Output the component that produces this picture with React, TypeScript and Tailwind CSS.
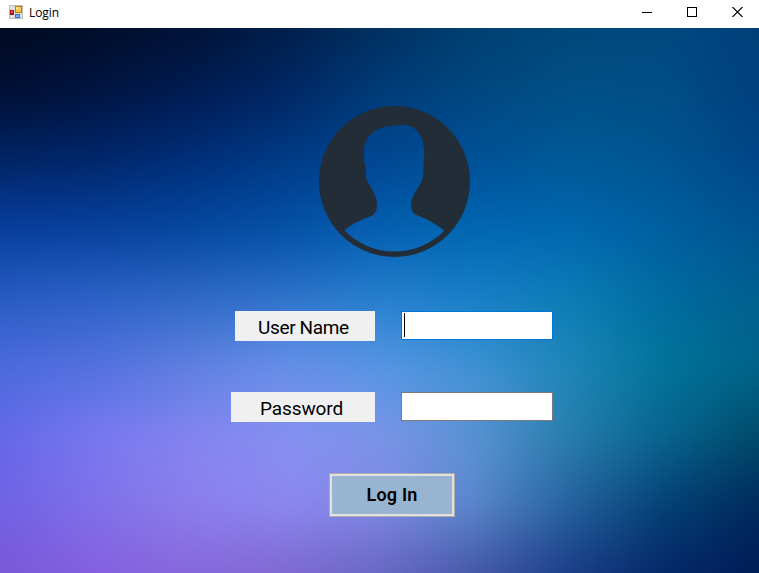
import { useId } from "react";

// Colour samples of the wallpaper, evenly spaced from the top left to the bottom right.
const WALLPAPER = [
  ["#000a20", "#000e28", "#001236", "#001e4a", "#003060", "#004070", "#00487a", "#004880", "#003f7a"],
  ["#001036", "#001544", "#001c54", "#002866", "#003c7a", "#004882", "#005088", "#004f88", "#00407f"],
  ["#002668", "#00286e", "#00307c", "#003c88", "#004894", "#005298", "#005a98", "#005592", "#004688"],
  ["#083fa0", "#0842a0", "#0449a2", "#0452a8", "#0560b2", "#0068b4", "#0069b0", "#0060a0", "#005490"],
  ["#2a5cc4", "#2e62c8", "#326ac8", "#3074cc", "#2880d0", "#1880c8", "#0c7eb6", "#006ca0", "#006090"],
  ["#4c6bdc", "#5472e0", "#6080e2", "#6890e8", "#5896e4", "#4092d4", "#1e86b8", "#00749a", "#006488"],
  ["#6468e8", "#7878f0", "#8484f0", "#8690f0", "#7c94e8", "#5a92d4", "#287eae", "#08648e", "#004a6a"],
  ["#7062e4", "#8070ea", "#8c7eec", "#8c88f0", "#8088e4", "#5a88cc", "#2662a0", "#044274", "#002a5c"],
  ["#7858d8", "#8460e0", "#8668dc", "#8068d0", "#6868c4", "#4658a8", "#1a3e88", "#042868", "#001c56"],
];

function Wallpaper() {
  const id = useId();
  const band = 68;
  return (
    <svg className="absolute inset-0" width="759" height="545" viewBox="0 0 759 545" aria-hidden="true">
      <defs>
        {WALLPAPER.map((row, r) => (
          <linearGradient key={r} id={`${id}row${r}`} gradientUnits="userSpaceOnUse" x1="0" x2="759" y1="0" y2="0">
            {row.map((c, i) => (
              <stop key={i} offset={i / 8} stopColor={c} />
            ))}
          </linearGradient>
        ))}
        <linearGradient id={`${id}fade`} x1="0" x2="0" y1="0" y2="1">
          <stop offset="0" stopColor="#fff" stopOpacity="0" />
          <stop offset="1" stopColor="#fff" />
        </linearGradient>
        {WALLPAPER.slice(1).map((_, r) => (
          <mask key={r} id={`${id}mask${r}`} maskUnits="userSpaceOnUse" x="-60" y={r * band} width="880" height={band} style={{ maskType: "alpha" }}>
            <rect x="-60" y={r * band} width="880" height={band} fill={`url(#${id}fade)`} />
          </mask>
        ))}
        <filter id={`${id}soft`} filterUnits="userSpaceOnUse" x="-60" y="-60" width="880" height="665" colorInterpolationFilters="sRGB">
          <feGaussianBlur stdDeviation="14" />
        </filter>
      </defs>
      <g filter={`url(#${id}soft)`}>
        <rect x="-60" y="-60" width="880" height="60" fill={`url(#${id}row0)`} />
        {WALLPAPER.slice(0, 8).map((_, r) => (
          <g key={r}>
            <rect x="-60" y={r * band} width="880" height={band} fill={`url(#${id}row${r})`} />
            <rect x="-60" y={r * band} width="880" height={band} fill={`url(#${id}row${r + 1})`} mask={`url(#${id}mask${r})`} />
          </g>
        ))}
        <rect x="-60" y="544" width="880" height="61" fill={`url(#${id}row8)`} />
      </g>
    </svg>
  );
}

function AppIcon() {
  return (
    <svg width="14" height="14" viewBox="0 0 14 14" shapeRendering="crispEdges" aria-hidden="true">
      <rect x="0.5" y="0.5" width="13" height="13" fill="#e0e0e0" stroke="#bcbcbc" />
      <rect x="6" y="1" width="7" height="7" fill="#b98500" />
      <rect x="7" y="2" width="5" height="5" fill="#f7c843" />
      <rect x="7" y="2" width="3" height="2" fill="#ffe08a" />
      <rect x="1" y="5" width="4" height="5" fill="#a51414" />
      <rect x="2" y="6" width="2" height="2" fill="#e0584a" />
      <rect x="6" y="9" width="5" height="4" fill="#3b6fd0" />
      <rect x="7" y="10" width="3" height="2" fill="#7fb0ff" />
    </svg>
  );
}

function TitleBar() {
  return (
    <header className="flex h-7 items-center bg-white pl-[9px] pr-4">
      <div className="-mt-1 flex items-center gap-1.5">
        <AppIcon />
        <span className="mt-0.5 font-['Open_Sans','Noto_Sans',sans-serif] text-[12px] leading-4 tracking-[-0.1px] text-black">Login</span>
      </div>
      <div className="-mt-1 ml-auto flex gap-[35px]">
        <svg width="10" height="10" viewBox="0 0 10 10" shapeRendering="crispEdges">
          <path d="M0 5.5H10" stroke="#000" />
        </svg>
        <svg width="10" height="10" viewBox="0 0 10 10" shapeRendering="crispEdges">
          <rect x="0.5" y="0.5" width="9" height="9" fill="none" stroke="#000" />
        </svg>
        <svg width="11" height="10" viewBox="0 0 11 10">
          <path d="M.5 0L10.5 10M10.5 0L.5 10" stroke="#000" strokeWidth="1.1" />
        </svg>
      </div>
    </header>
  );
}

function Avatar() {
  return (
    <svg width="151" height="151" viewBox="0 0 151 151" aria-hidden="true">
      <path
        fill="#232d37"
        fillRule="evenodd"
        d="M75.5 0A75.5 75.5 0 1 1 75.5 151A75.5 75.5 0 1 1 75.5 0Z
           M76 19.4C79 18.8 81 18.7 84 18.7C99 19 105.3 32 105.3 48C105.3 55 104 58 104.3 63C105 67 104 72 101.5 77.3C98 84 92 91 92 99C92 104 94 107 97 109C104 111 114 116 125.3 124.7A70 70 0 0 1 25.3 124.4C34 117 44 113 53.7 109.3C57 107 58 103 58 99C58 86 49 80 46.8 71C46 68 47.5 65 46.8 62C45.5 57 44.7 53 44.7 47C44.7 30 56 20 76 19.4Z"
      />
    </svg>
  );
}

export default function App() {
  return (
    <div className="flex h-[573px] w-[759px] flex-col overflow-hidden bg-white font-[Roboto,sans-serif] text-black">
      <TitleBar />
      <main className="relative flex-1 overflow-hidden">
        <Wallpaper />
        <form className="relative flex flex-col pt-[78px]" onSubmit={(e) => e.preventDefault()}>
          <div className="ml-[319px] h-[151px]">
            <Avatar />
          </div>
          <div className="ml-[231px] mt-[54px] grid w-[322px] grid-cols-[144px_152px] items-start gap-x-[26px] gap-y-[51px]">
            <label htmlFor="user" className="ml-1 h-[30px] bg-[#f0f0f0] pl-[23px] pt-[3px] text-[19px] leading-[28px] tracking-[-0.35px]">
              User Name
            </label>
            <div className="flex h-[29px] items-start border border-[#0078d7] bg-white pl-0.5 pt-px">
              <span className="h-6 w-px bg-black" />
              <input id="user" className="h-6 min-w-0 flex-1 bg-transparent outline-none" />
            </div>
            <label htmlFor="password" className="h-[30px] bg-[#f0f0f0] pl-[29px] pt-[3px] text-[19px] leading-[28px] tracking-[-0.1px]">
              Password
            </label>
            <input id="password" type="password" className="h-[29px] w-[152px] border border-[#7a7a7a] bg-white outline-none" />
          </div>
          <button className="ml-[329px] mt-[51px] h-[44px] w-[126px] border border-[#adadad] bg-[#e1e1e1] p-0.5">
            <span className="flex h-full items-center justify-center bg-[#99b4d1] text-[18px] font-semibold leading-none tracking-[0.2px]">
              Log In
            </span>
          </button>
        </form>
      </main>
    </div>
  );
}
